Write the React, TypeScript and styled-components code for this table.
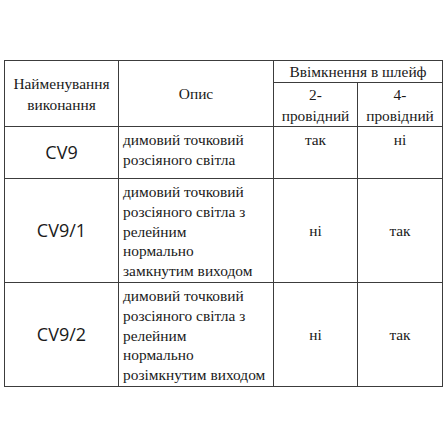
import styled, { createGlobalStyle } from 'styled-components'

const GlobalStyle = createGlobalStyle`
  html, body {
    margin: 0;
    padding: 0;
    background: #ffffff;
  }
  body {
    font-family: "Liberation Serif", serif;
    color: #1a1a1a;
  }
`

const Page = styled.div`
  width: 445px;
  height: 445px;
  padding: 60px 0 0 4px;
  box-sizing: border-box;
`

const Table = styled.table`
  width: 438px;
  border-collapse: collapse;
  table-layout: fixed;
`

const Row = styled.tr<{ $h: number }>`
  height: ${(p) => p.$h}px;
`

const Cell = styled.td<{ $valign?: string }>`
  border: 1px solid #3c3c3c;
  padding: ${(p) => (p.$valign === 'top' ? '3px 3px 1px' : '0 3px')};
  font-family: "Liberation Serif", serif;
  font-size: 15.4px;
  font-weight: normal;
  line-height: 19.8px;
  color: #1a1a1a;
  text-align: center;
  vertical-align: ${(p) => p.$valign || 'middle'};
  overflow: hidden;
  white-space: nowrap;
`

const HeadCell = styled(Cell).attrs({ as: 'th' })`
  line-height: 21px;
`

const Code = styled(Cell)`
  font-family: "Open Sans", "Liberation Sans", sans-serif;
  font-size: 18px;
`

const Desc = styled(Cell)`
  padding: 3px 2px 1px 4px;
  text-align: left;
  vertical-align: top;
`

const rows = [
  { code: 'CV9', desc: ['димовий точковий', 'розсіяного світла'], two: 'так', four: 'ні', h: 52, top: true },
  {
    code: 'CV9/1',
    desc: ['димовий точковий', 'розсіяного світла з', 'релейним', 'нормально', 'замкнутим виходом'],
    two: 'ні',
    four: 'так',
    h: 103,
  },
  {
    code: 'CV9/2',
    desc: ['димовий точковий', 'розсіяного світла з', 'релейним', 'нормально', 'розімкнутим виходом'],
    two: 'ні',
    four: 'так',
    h: 104,
  },
]

export default function App() {
  return (
    <Page>
      <GlobalStyle />
      <Table>
        <colgroup>
          <col style={{ width: 114 }} />
          <col style={{ width: 155 }} />
          <col style={{ width: 84 }} />
          <col style={{ width: 85 }} />
        </colgroup>
        <thead>
          <Row $h={22}>
            <HeadCell rowSpan={2}>
              Найменування
              <br />
              виконання
            </HeadCell>
            <HeadCell rowSpan={2}>Опис</HeadCell>
            <HeadCell colSpan={2}>Ввімкнення в шлейф</HeadCell>
          </Row>
          <Row $h={44}>
            <HeadCell>
              2-
              <br />
              провідний
            </HeadCell>
            <HeadCell>
              4-
              <br />
              провідний
            </HeadCell>
          </Row>
        </thead>
        <tbody>
          {rows.map((r) => (
            <Row key={r.code} $h={r.h}>
              <Code>{r.code}</Code>
              <Desc>
                {r.desc.map((line, i) => (
                  <div key={i}>{line}</div>
                ))}
              </Desc>
              <Cell $valign={r.top ? 'top' : 'middle'}>{r.two}</Cell>
              <Cell $valign={r.top ? 'top' : 'middle'}>{r.four}</Cell>
            </Row>
          ))}
        </tbody>
      </Table>
    </Page>
  )
}
